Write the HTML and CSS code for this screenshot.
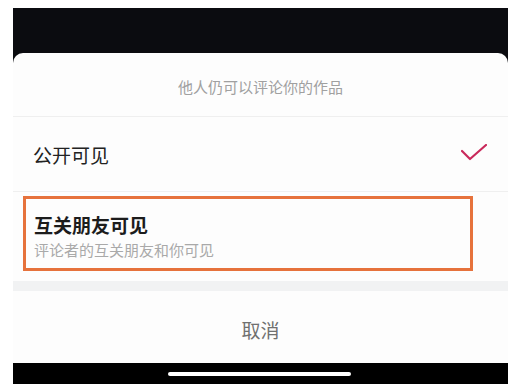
FILE: index.html
```html
<!DOCTYPE html>
<html lang="zh-CN">
<head>
<meta charset="utf-8">
<link rel="stylesheet" href="styles.css">
</head>
<body>
<div class="phone">
  <div class="backdrop"></div>
  <div class="sheet">
    <div class="sheet-title">他人仍可以评论你的作品</div>
    <div class="option option-public">
      <span class="option-label">公开可见</span>
      <svg class="check" width="26" height="18" viewBox="0 0 26 18">
        <path d="M1 7 L9 15 L25 1" fill="none" stroke="#c9295b" stroke-width="2.2" stroke-linecap="round" stroke-linejoin="round"/>
      </svg>
    </div>
    <div class="option-friends">
      <div class="highlight">
        <div class="friends-label">互关朋友可见</div>
        <div class="friends-sub">评论者的互关朋友和你可见</div>
      </div>
    </div>
    <div class="band"></div>
    <div class="cancel">取消</div>
  </div>
  <div class="home-bar"><span class="indicator"></span></div>
</div>
</body>
</html>
```

FILE: styles.css
```css
html, body {
  margin: 0;
  padding: 0;
  background: #ffffff;
}
body {
  font-family: "Noto Sans CJK SC", "Noto Sans", sans-serif;
}
.phone {
  margin: 8px 0 0 13px;
  width: 495px;
  background: #0b0c10;
}
.backdrop {
  height: 45px;
}
.sheet {
  background: #fdfdfd;
  border-radius: 10px 10px 0 0;
  display: flex;
  flex-direction: column;
}
.sheet-title {
  height: 64px;
  box-sizing: border-box;
  padding-top: 24px;
  line-height: 20px;
  font-size: 15px;
  color: #a0a0a0;
  text-align: center;
  border-bottom: 1px solid #efefef;
}
.option {
  height: 75px;
  box-sizing: border-box;
  display: flex;
  align-items: center;
  justify-content: space-between;
  padding: 0 21px 0 20px;
  border-bottom: 1px solid #efefef;
}
.option-label {
  font-size: 19px;
  color: #222222;
  font-weight: 400;
}
.check {
  display: block;
  margin-top: -2px;
}
.option-friends {
  height: 89px;
  box-sizing: border-box;
  padding: 4px 0 0 10px;
}
.highlight {
  width: 450px;
  height: 75px;
  box-sizing: border-box;
  border: 3px solid #e6723c;
  padding: 14px 0 0 8px;
}
.friends-label {
  font-size: 19px;
  line-height: 24px;
  font-weight: 700;
  color: #1c1c1c;
}
.friends-sub {
  margin-top: 3px;
  font-size: 15px;
  line-height: 20px;
  color: #a9a9a9;
}
.band {
  height: 10px;
  background: #f1f2f3;
}
.cancel {
  height: 72px;
  display: flex;
  align-items: center;
  justify-content: center;
  font-size: 19px;
  color: #707070;
  padding-top: 4px;
  box-sizing: border-box;
}
.home-bar {
  height: 21px;
  background: #000000;
  display: flex;
  align-items: center;
  justify-content: center;
}
.indicator {
  display: block;
  width: 183px;
  height: 4px;
  border-radius: 2px;
  background: #ffffff;
  margin-right: 3px;
}
```
